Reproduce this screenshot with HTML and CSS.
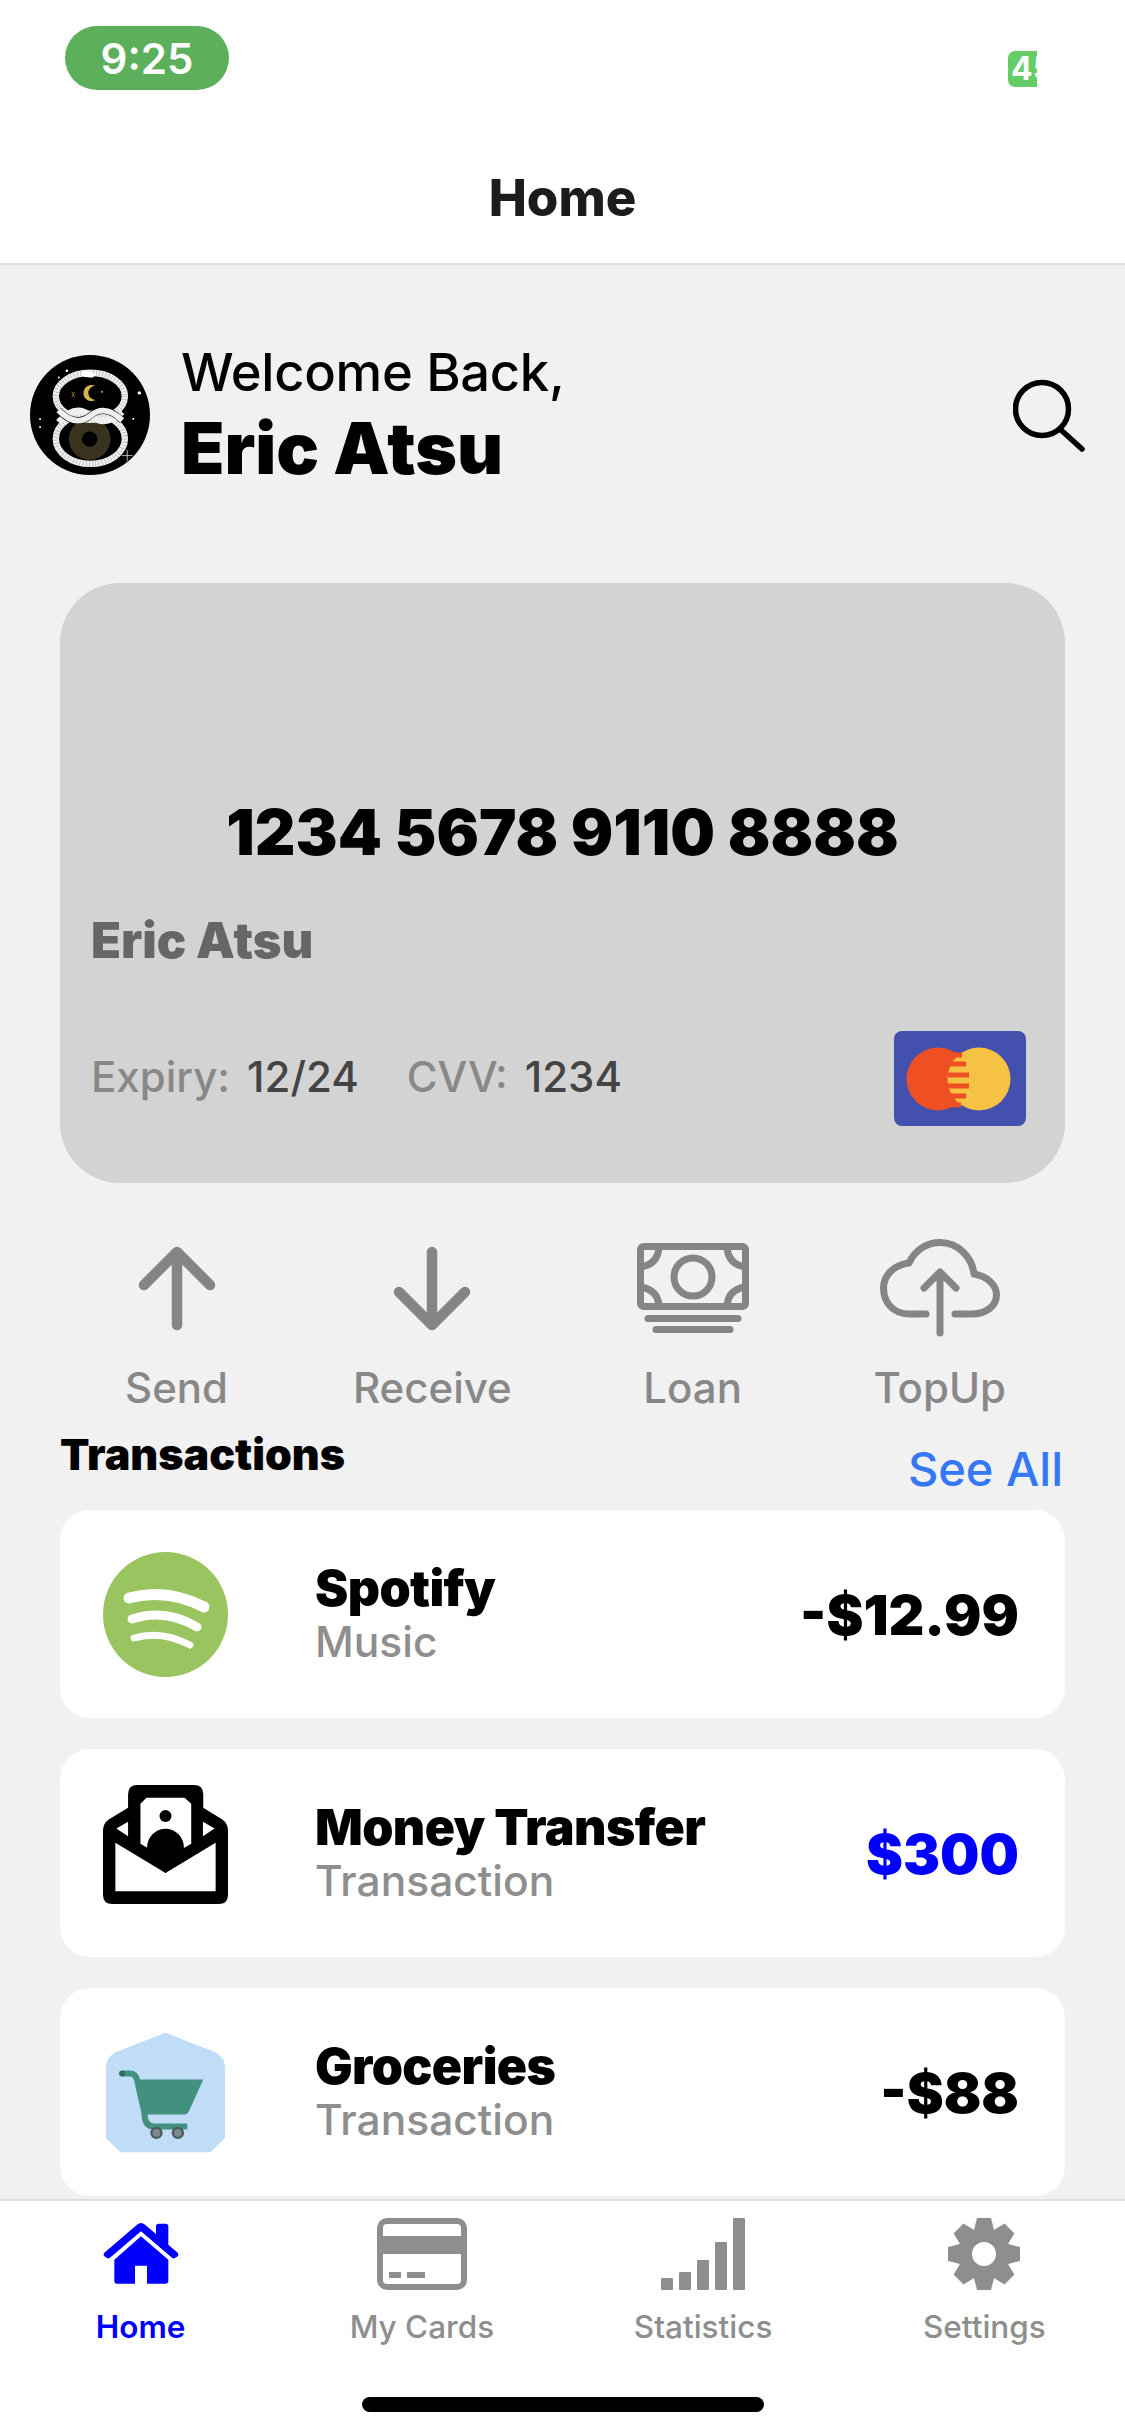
FILE: index.html
```html
<!DOCTYPE html>
<html lang="en">
<head>
  <meta charset="UTF-8" />
  <meta name="viewport" content="width=device-width, initial-scale=1.0" />
  <title>Home</title>
  <link rel="stylesheet" href="styles.css">
</head>
<body>

<div class="screen">

  <div class="top-bar">
    <div class="status">
      <span class="time">9:25</span>
      <span class="battery"><span>45</span></span>
    </div>
    <h1 class="page-title">Home</h1>
  </div>

  <div class="content">

    <div class="greeting">
      <svg class="avatar" viewBox="30 45 358 358">
        <circle cx="209" cy="224" r="179" fill="#000"/>
        <circle cx="208" cy="296" r="62" fill="#38331f"/>
        <circle cx="208" cy="296" r="23" fill="#000"/>
        <ellipse cx="210" cy="168" rx="103" ry="70" fill="none" stroke="#efefef" stroke-width="19"/>
        <ellipse cx="210" cy="168" rx="103" ry="70" fill="none" stroke="#999" stroke-width="15" stroke-dasharray="1.500 8"/>
        <ellipse cx="210" cy="295" rx="103" ry="75" fill="none" stroke="#efefef" stroke-width="19"/>
        <ellipse cx="210" cy="295" rx="103" ry="75" fill="none" stroke="#999" stroke-width="15" stroke-dasharray="1.500 8"/>
        <path d="M115 245 Q165 190 210 226 Q255 262 305 215" fill="none" stroke="#efefef" stroke-width="19"/>
        <path d="M115 210 Q165 262 210 226 Q255 190 305 240" fill="none" stroke="#000" stroke-width="20"/>
        <path d="M115 210 Q165 262 210 226 Q255 190 305 240" fill="none" stroke="#efefef" stroke-width="17"/>
        <path d="M182 96 L205 92 L229 104 L215 113 L190 110Z" fill="#fff"/>
        <path d="M224 137 a24 24 0 1 0 2 42 a20 20 0 1 1 -2 -42z" fill="#d9b44a"/>
        <path d="M155 155 l8 16 M163 155 l-8 16" stroke="#c99b3a" stroke-width="2"/>
        <circle cx="245" cy="155" r="3" fill="#c99b3a"/>
        <circle cx="140" cy="92" r="4" fill="#fff"/>
        <circle cx="116" cy="112" r="3" fill="#fff"/>
        <circle cx="356" cy="158" r="5" fill="#fff"/>
        <circle cx="60" cy="236" r="3" fill="#fff"/>
        <circle cx="60" cy="260" r="3" fill="#fff"/>
        <circle cx="338" cy="235" r="3" fill="#fff"/>
        <path d="M320 328 v34 M304 345 h32" stroke="#fff" stroke-width="2"/>
      </svg>
      <div class="greeting-text">
        <div class="welcome">Welcome Back,</div>
        <div class="user-name">Eric Atsu</div>
      </div>
      <svg class="search" viewBox="0 0 72 73">
        <circle cx="29" cy="30" r="26.500" fill="none" stroke="#000" stroke-width="5.500"/>
        <path d="M48 51 L69 70" stroke="#000" stroke-width="5.500" stroke-linecap="round"/>
      </svg>
    </div>

    <div class="bank-card">
      <div class="card-number">1234 5678 9110 8888</div>
      <div class="card-name">Eric Atsu</div>
      <div class="card-footer">
        <div class="card-meta">
          <span class="meta-label">Expiry:</span>
          <span class="meta-value">12/24</span>
          <span class="meta-label cvv">CVV:</span>
          <span class="meta-value">1234</span>
        </div>
        <svg class="card-logo" viewBox="0 0 132 95">
          <rect width="132" height="95" rx="8" fill="#4350ad"/>
          <circle cx="44" cy="48" r="31.500" fill="#ee5023"/>
          <circle cx="85" cy="48" r="31.500" fill="#f6c243"/>
          <path d="M58 24 H68 M54 33 H72 M54 44 H75 M54 55 H75 M55 65 H72 M59 74 H67" stroke="#ee5023" stroke-width="5"/>
        </svg>
      </div>
    </div>

    <div class="actions">
      <div class="action">
        <div class="action-icon">
          <svg width="78" height="85" viewBox="0 0 78 85">
            <path d="M39 6V79M6 39L39 6L72 39" fill="none" stroke="#858585" stroke-width="10.500" stroke-linecap="round" stroke-linejoin="round"/>
          </svg>
        </div>
        <span>Send</span>
      </div>
      <div class="action">
        <div class="action-icon">
          <svg width="78" height="85" viewBox="0 0 78 85">
            <path d="M39 6V79M6 46L39 79L72 46" fill="none" stroke="#858585" stroke-width="10.500" stroke-linecap="round" stroke-linejoin="round"/>
          </svg>
        </div>
        <span>Receive</span>
      </div>
      <div class="action">
        <div class="action-icon">
          <svg width="112" height="90" viewBox="0 0 112 90">
            <g fill="none" stroke="#858585" stroke-width="7">
              <rect x="3.500" y="3.500" width="105" height="60" rx="3"/>
              <circle cx="56" cy="34" r="19"/>
              <path d="M22 4 Q21 21 4 24 M90 4 Q91 21 108 24 M4 44 Q21 47 22 63 M108 44 Q91 47 90 63"/>
              <path d="M11 75.500H101M19 86.500H93" stroke-linecap="round"/>
            </g>
          </svg>
        </div>
        <span>Loan</span>
      </div>
      <div class="action">
        <div class="action-icon">
          <svg width="120" height="98" viewBox="0 0 120 98">
            <g fill="none" stroke="#858585" stroke-width="7" stroke-linecap="round" stroke-linejoin="round">
              <path d="M46 75H29C13 75 3.500 63 3.500 49C3.500 36 14 26 29 24C35 11 47 3.500 60 3.500C78 3.500 92 18 94 35C107 37 116.500 46 116.500 56C116.500 67 106 75 92 75H75"/>
              <path d="M60 94V33M44 49L60 33L76 49"/>
            </g>
          </svg>
        </div>
        <span>TopUp</span>
      </div>
    </div>

    <div class="section-head">
      <h2>Transactions</h2>
      <span class="see-all">See All</span>
    </div>

    <div class="tx-list">
      <div class="tx-row">
        <svg class="tx-icon" viewBox="0 0 125 125">
          <circle cx="62.500" cy="62.500" r="62.500" fill="#9ac45f"/>
          <g fill="none" stroke="#fff" stroke-linecap="round">
            <path d="M26 46 Q64 36 101 55" stroke-width="11"/>
            <path d="M29 67 Q62 56 94 75" stroke-width="9"/>
            <path d="M31 86 Q58 78 87 93" stroke-width="7"/>
          </g>
        </svg>
        <div class="tx-text">
          <div class="tx-title">Spotify</div>
          <div class="tx-sub">Music</div>
        </div>
        <div class="tx-amount">-$12.99</div>
      </div>

      <div class="tx-row">
        <svg class="tx-icon raised" viewBox="68 42 374 374">
          <path d="M143 70Q143 42 171 42H340Q368 42 368 70V110L425 145Q442 157 442 178V370Q442 398 414 398H96Q68 398 68 370V178Q68 157 85 145L143 110Z" fill="#000"/>
          <path d="M180 98L198 80H312L332 98V218L255 262L180 218Z" fill="#fff"/>
          <path d="M108 172L143 152V195Z M402 172L367 152V195Z" fill="#fff"/>
          <path d="M105 215L255 305L405 215V360H105Z" fill="#fff"/>
          <circle cx="255" cy="135" r="18" fill="#000"/>
          <circle cx="255" cy="228" r="55" fill="#000"/>
          <path d="M180 225L255 270L330 225L255 305Z" fill="#000"/>
        </svg>
        <div class="tx-text">
          <div class="tx-title">Money Transfer</div>
          <div class="tx-sub">Transaction</div>
        </div>
        <div class="tx-amount income">$300</div>
      </div>

      <div class="tx-row">
        <svg class="tx-icon" viewBox="68 790 374 358">
          <path d="M255 790L395 845Q433 860 433 895V1105L390 1148H120L77 1105V895Q77 860 115 845Z" fill="#c0dcf7"/>
          <path d="M168 930H368L325 1025Q320 1035 308 1035H190Z" fill="#42917f"/>
          <path d="M125 912H150Q165 912 170 932L192 1030Q192 1071 222 1071H320" fill="none" stroke="#42917f" stroke-width="18"/>
          <circle cx="125" cy="912" r="9" fill="#2f6c60"/>
          <circle cx="228" cy="1090" r="15" fill="#7d8a90" stroke="#4c5a60" stroke-width="7"/>
          <circle cx="292" cy="1090" r="15" fill="#7d8a90" stroke="#4c5a60" stroke-width="7"/>
        </svg>
        <div class="tx-text">
          <div class="tx-title">Groceries</div>
          <div class="tx-sub">Transaction</div>
        </div>
        <div class="tx-amount">-$88</div>
      </div>
    </div>

  </div>

  <div class="tab-bar">
    <div class="tabs">
      <div class="tab active">
        <svg width="80" height="72" viewBox="30 40 240 216">
          <path d="M150 55Q156 55 162 60L195 88V65Q195 57 203 57H224Q232 57 232 65V120L260 144Q265 150 260 155L252 160Q247 163 243 159L150 80L57 159Q53 163 48 160L40 155Q35 150 40 144L138 60Q144 55 150 55Z" fill="#0000ff"/>
          <path d="M150 95L232 165V228Q232 237 223 237H168V183H132V237H78Q70 237 70 228V165Z" fill="#0000ff"/>
        </svg>
        <span>Home</span>
      </div>
      <div class="tab">
        <svg width="90" height="72" viewBox="0 0 90 72">
          <rect x="3" y="3" width="84" height="66" rx="7" fill="none" stroke="#8e8e8e" stroke-width="6"/>
          <path d="M3 18H87V36H3Z" fill="#8e8e8e"/>
          <path d="M12 54H24V60H12Z M30 54H48V60H30Z" fill="#8e8e8e"/>
        </svg>
        <span>My Cards</span>
      </div>
      <div class="tab">
        <svg width="84" height="72" viewBox="0 0 84 72">
          <rect x="0" y="60" width="12" height="12" rx="1" fill="#8e8e8e"/>
          <rect x="18" y="54" width="12" height="18" rx="1" fill="#8e8e8e"/>
          <rect x="36" y="42" width="12" height="30" rx="1" fill="#8e8e8e"/>
          <rect x="54" y="24" width="12" height="48" rx="1" fill="#8e8e8e"/>
          <rect x="72" y="0" width="12" height="72" rx="1" fill="#8e8e8e"/>
        </svg>
        <span>Statistics</span>
      </div>
      <div class="tab">
        <svg width="74" height="72" viewBox="-37 -36 74 72">
          <g fill="#8e8e8e">
            <polygon points="-7,-36 7,-36 10,-24 -10,-24"/>
            <polygon points="-7,-36 7,-36 10,-24 -10,-24" transform="rotate(45)"/>
            <polygon points="-7,-36 7,-36 10,-24 -10,-24" transform="rotate(90)"/>
            <polygon points="-7,-36 7,-36 10,-24 -10,-24" transform="rotate(135)"/>
            <polygon points="-7,-36 7,-36 10,-24 -10,-24" transform="rotate(180)"/>
            <polygon points="-7,-36 7,-36 10,-24 -10,-24" transform="rotate(225)"/>
            <polygon points="-7,-36 7,-36 10,-24 -10,-24" transform="rotate(270)"/>
            <polygon points="-7,-36 7,-36 10,-24 -10,-24" transform="rotate(315)"/>
          </g>
          <circle r="19" fill="none" stroke="#8e8e8e" stroke-width="14"/>
        </svg>
        <span>Settings</span>
      </div>
    </div>
    <div class="home-indicator"></div>
  </div>

</div>

</body>
</html>
```

FILE: styles.css
```css
* {
  box-sizing: border-box;
}

body {
  margin: 0;
  padding: 0;
  background: #f1f1f1;
  font-family: Inter, "Liberation Sans", sans-serif;
}

.screen {
  height: 2436px;
  display: flex;
  flex-direction: column;
  overflow: hidden;
}

/* top bar */

.top-bar {
  background: #fff;
  height: 265px;
  border-bottom: 2px solid #dedede;
}

.status {
  height: 147px;
  padding: 26px 88px 0 65px;
  display: flex;
  justify-content: space-between;
  align-items: flex-start;
}

.time {
  width: 164px;
  height: 64px;
  border-radius: 32px;
  background: #5cb05c;
  color: #fff;
  font-size: 42px;
  font-weight: 600;
  line-height: 66px;
  text-align: center;
}

.battery {
  width: 29px;
  height: 36px;
  margin-top: 25px;
  border-radius: 7px 0 0 7px;
  background: #66cc66;
  color: #fff;
  font-size: 32px;
  font-weight: 700;
  line-height: 36px;
  overflow: hidden;
  padding-left: 3px;
  white-space: nowrap;
}

.page-title {
  margin: 0;
  font-size: 51px;
  font-weight: 800;
  line-height: 102px;
  text-align: center;
  color: #1c1c1c;
}

/* greeting */

.content {
  flex: 1;
  overflow: hidden;
}

.greeting {
  display: flex;
  align-items: center;
  height: 140px;
  margin-top: 80px;
  padding: 0 40px 0 30px;
}

.avatar {
  width: 120px;
  height: 120px;
  margin-right: 32px;
}

.greeting-text {
  flex: 1;
}

.welcome {
  margin-left: -1px;
  font-size: 52.500px;
  font-weight: 500;
  letter-spacing: -0.3px;
  line-height: 60px;
  color: #000;
}

.user-name {
  margin-top: 6px;
  margin-left: -1px;
  font-size: 71px;
  font-weight: 900;
  line-height: 80px;
  color: #000;
}

.search {
  width: 72px;
  height: 73px;
}

/* card */

.bank-card {
  height: 600px;
  margin: 98px 60px 0;
  padding: 215px 39px 0 31px;
  background: #d3d3d3;
  border-radius: 60px;
}

.card-number {
  margin-left: 8px;
  font-size: 63px;
  font-weight: 900;
  line-height: 68px;
  text-align: center;
  color: #000;
}

.card-name {
  margin-top: 45px;
  font-size: 49px;
  font-weight: 900;
  line-height: 60px;
  color: #666;
}

.card-footer {
  display: flex;
  justify-content: space-between;
  align-items: center;
  margin-top: 60px;
}

.card-meta {
  font-size: 42px;
  font-weight: 500;
  display: flex;
  gap: 17px;
  padding-bottom: 4px;
}

.meta-label {
  color: #888;
}

.meta-value {
  color: #444;
}

.cvv {
  margin-left: 31px;
}

.card-logo {
  width: 132px;
  height: 95px;
}

/* actions */

.actions {
  display: flex;
  justify-content: space-between;
  margin-top: 55px;
  padding: 0 119px 0 125px;
}

.action {
  display: flex;
  flex-direction: column;
  align-items: center;
  gap: 25px;
  font-size: 42px;
  font-weight: 500;
  line-height: 50px;
  color: #888;
}

.action-icon {
  height: 100px;
  display: flex;
  align-items: center;
  justify-content: center;
}

/* transactions */

.section-head {
  display: flex;
  justify-content: space-between;
  align-items: flex-start;
  height: 86px;
  margin-top: 11px;
  padding: 0 62px 0 60px;
}

.section-head h2 {
  margin: 0;
  font-size: 43px;
  font-weight: 900;
  line-height: 60px;
  color: #000;
}

.see-all {
  margin-top: 15px;
  font-size: 47px;
  font-weight: 500;
  line-height: 60px;
  color: #3478f6;
}

.tx-list {
  display: flex;
  flex-direction: column;
  gap: 31px;
  padding: 0 60px;
}

.tx-row {
  display: flex;
  align-items: center;
  height: 208px;
  padding: 0 46px 0 43px;
  background: #fff;
  border-radius: 30px;
}

.tx-icon {
  width: 125px;
  height: 125px;
  margin-right: 87px;
}

.tx-icon.raised {
  margin-bottom: 12px;
}

.tx-text {
  flex: 1;
}

.tx-title {
  font-size: 50px;
  font-weight: 900;
  letter-spacing: -0.6px;
  line-height: 56px;
  color: #000;
}

.tx-sub {
  font-size: 42.500px;
  font-weight: 500;
  line-height: 52px;
  color: #8e8e8e;
}

.tx-amount {
  font-size: 55.500px;
  font-weight: 900;
  color: #000;
}

.income {
  color: #0000ff;
}

/* tab bar */

.tab-bar {
  height: 237px;
  background: #fff;
  border-top: 2px solid #dedede;
  padding-top: 17px;
}

.tabs {
  display: grid;
  grid-template-columns: repeat(4, 1fr);
}

.tab {
  display: flex;
  flex-direction: column;
  align-items: center;
  gap: 17px;
  font-size: 31.500px;
  font-weight: 500;
  line-height: 40px;
  color: #8e8e8e;
}

.tab.active {
  color: #0000ff;
  font-weight: 600;
}

.home-indicator {
  width: 402px;
  height: 15px;
  margin: 50px auto 0;
  background: #000;
  border-radius: 8px;
}
```
